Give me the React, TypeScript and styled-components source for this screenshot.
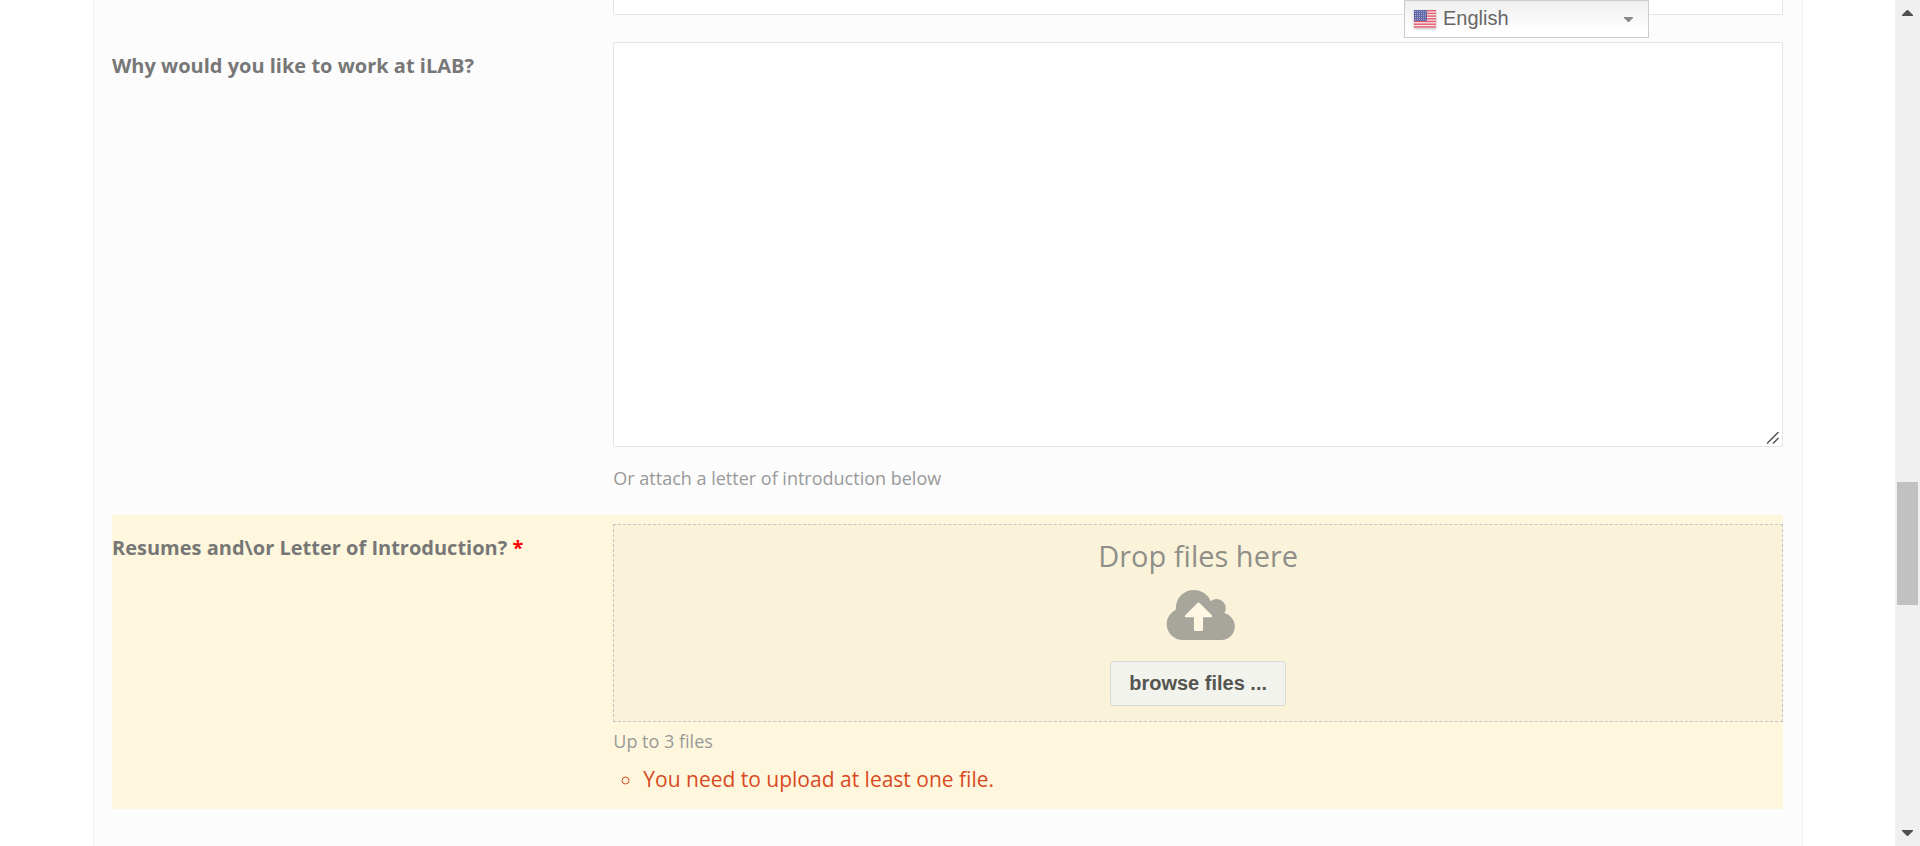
import React from "react";
import styled, { createGlobalStyle } from "styled-components";

const GlobalStyle = createGlobalStyle`
  *, *::before, *::after { box-sizing: border-box; }
  body {
    margin: 0;
    background: #fff;
    color: #777;
    font-family: "Open Sans", "Noto Sans", sans-serif;
    font-size: 20px;
    line-height: 30px;
  }
`;

const Shell = styled.div`
  display: flex;
  min-height: 100vh;
`;

const Content = styled.main`
  display: flex;
  flex: 1;
  min-width: 0;
  padding: 0 92px 0 93px;
`;

const Panel = styled.form`
  flex: 1;
  min-width: 0;
  padding: 0 19px 0 18px;
  background: #fcfcfc;
  border: solid #f2f2f2;
  border-width: 0 1px;
`;

const Field = styled.div<{ $invalid?: boolean }>`
  display: grid;
  grid-template-columns: 3fr 7fr;
  padding: ${(p) => (p.$invalid ? "9px 0 15px" : "0 0 23px")};
  background: ${(p) => (p.$invalid ? "#fff7dd" : "transparent")};
`;

const FirstField = styled(Field)`
  padding-bottom: 27px;
`;

const Label = styled.label`
  padding-top: 9px;
  font-weight: 700;
`;

const Required = styled.span`
  color: #f00;
`;

const Control = styled.div`
  min-width: 0;
`;

const TextInput = styled.input`
  display: block;
  width: 100%;
  height: 15px;
  border: 1px solid #e4e4e4;
  border-top: 0;
  border-radius: 0 0 2px 2px;
  background: #fff;
  outline: none;
`;

const TextAreaBox = styled.div`
  position: relative;
`;

const TextArea = styled.textarea`
  display: block;
  width: 100%;
  height: 405px;
  padding: 12px;
  border: 1px solid #e4e4e4;
  border-radius: 2px;
  background: #fff;
  color: #777;
  font: inherit;
  resize: none;
  outline: none;
`;

const Grip = styled.svg`
  position: absolute;
  right: 4px;
  bottom: 3px;
  width: 12px;
  height: 12px;
  fill: none;
  stroke: #555;
  stroke-width: 1.5;
  pointer-events: none;
`;

const Hint = styled.p<{ $gap: number }>`
  margin: ${(p) => p.$gap}px 0 0;
  color: #999;
  font-size: 18px;
  line-height: 28px;
`;

const DropArea = styled.div`
  display: flex;
  flex-direction: column;
  align-items: center;
  height: 198px;
  padding-top: 9px;
  border: 1px dashed #c4c4c4;
  background: #fbf3d9;
`;

const DropText = styled.span`
  color: #8f8f8a;
  font-size: 29px;
  line-height: 44px;
`;

const CloudUpload = styled.svg`
  width: 73px;
  height: 50px;
  margin: 12px 0 21px;
  fill: #a8a69c;
`;

const BrowseButton = styled.button`
  width: 176px;
  height: 45px;
  padding: 0 0 2px;
  border: 1px solid #d9dad6;
  border-radius: 3px;
  background: #f3f3ee;
  color: #555550;
  font: 700 20px/24px "Liberation Sans", Arial, sans-serif;
`;

const Errors = styled.ul`
  margin: 9px 0 0;
  padding: 0 0 0 30px;
  color: #d84a1f;
  font-size: 21px;
  line-height: 30px;
  list-style: circle;
`;

const Language = styled.label`
  position: fixed;
  top: 0;
  right: 271px;
  display: flex;
  align-items: center;
  width: 245px;
  height: 38px;
  padding: 0 15px 0 9px;
  border: 1px solid #ccc;
  background: linear-gradient(#eee, #fff 80%);
`;

const Flag = styled.svg`
  flex: none;
  width: 22px;
  height: 18px;
  filter: drop-shadow(0 1px 1px #0004);
`;

const LanguageSelect = styled.select`
  appearance: none;
  flex: 1;
  min-width: 0;
  margin-left: 7px;
  padding: 0 0 2px;
  border: 0;
  background: transparent;
  color: #666;
  font: 20px/24px "Liberation Sans", Arial, sans-serif;
  outline: none;
`;

const Caret = styled.svg`
  flex: none;
  width: 9px;
  height: 5px;
  fill: #888;
`;

const ScrollTrack = styled.aside`
  display: flex;
  flex: none;
  flex-direction: column;
  align-items: center;
  justify-content: space-between;
  width: 25px;
  padding: 10px 0;
  background: #f0f0f0;
`;

const ScrollArrow = styled.svg`
  width: 11px;
  height: 6px;
  fill: #505050;
`;

const ScrollSpace = styled.div<{ $grow: number }>`
  flex: ${(p) => p.$grow} 0 0;
`;

const ScrollThumb = styled.div`
  width: 21px;
  height: 123px;
  background: #c1c1c1;
`;

const stripes = [0, 1, 2, 3, 4, 5, 6];
const starRows = [1, 3, 5, 7, 9];
const starCols = [1, 3, 5, 7, 9, 11];

export default function App() {
  return (
    <>
      <GlobalStyle />
      <Shell>
        <Content>
          <Panel>
            <FirstField>
              <span />
              <Control>
                <TextInput type="text" aria-label="Previous answer" />
              </Control>
            </FirstField>
            <Field>
              <Label htmlFor="reason">Why would you like to work at iLAB?</Label>
              <Control>
                <TextAreaBox>
                  <TextArea id="reason" aria-describedby="reason-hint" />
                  <Grip viewBox="0 0 12 12" aria-hidden="true">
                    <path d="M0 11.500L11.500 0M6 11.500L11.500 6" />
                  </Grip>
                </TextAreaBox>
                <Hint id="reason-hint" $gap={17}>
                  Or attach a letter of introduction below
                </Hint>
              </Control>
            </Field>
            <Field $invalid>
              <Label htmlFor="browse">
                Resumes and\or Letter of Introduction? <Required>*</Required>
              </Label>
              <Control>
                <DropArea>
                  <DropText>Drop files here</DropText>
                  <CloudUpload viewBox="-192 128 2048 1408" aria-hidden="true">
                    <path fill="#fff7e1" d="M460 460h760v860h-760z" />
                    <path d="M1216 864q0-14-9-23l-352-352q-9-9-23-9t-23 9l-351 351q-10 12-10 24 0 14 9 23t23 9h224v352q0 13 9.500 22.500t22.500 9.500h192q13 0 22.500-9.500t9.500-22.500v-352h224q13 0 22.500-9.500t9.500-22.500zm640 288q0 159-112.500 271.500t-271.500 112.500h-1088q-185 0-316.500-131.500t-131.500-316.500q0-130 70-240t188-165q-2-30-2-43 0-212 150-362t362-150q156 0 285.500 87t188.500 231q71-62 166-62 106 0 181 75t75 181q0 76-41 138 130 31 213.500 135.500t83.500 238.500z" />
                  </CloudUpload>
                  <BrowseButton id="browse" type="button">
                    browse files ...
                  </BrowseButton>
                </DropArea>
                <Hint $gap={5}>Up to 3 files</Hint>
                <Errors>
                  <li>You need to upload at least one file.</li>
                </Errors>
              </Control>
            </Field>
          </Panel>
        </Content>
        <ScrollTrack aria-hidden="true">
          <ScrollArrow viewBox="0 0 11 6">
            <path d="M5 0h1l5 5v1H0V5z" />
          </ScrollArrow>
          <ScrollSpace $grow={466} />
          <ScrollThumb />
          <ScrollSpace $grow={225} />
          <ScrollArrow viewBox="0 0 11 6">
            <path d="M0 0h11v1L6 6H5L0 1z" />
          </ScrollArrow>
        </ScrollTrack>
      </Shell>
      <Language>
        <Flag viewBox="0 0 22 18" aria-hidden="true">
          <rect width="22" height="18" rx="1" fill="#f6e9ea" />
          {stripes.map((i) => (
            <rect key={i} y={i * 2.7} width="22" height="1.400" fill="#e2596c" />
          ))}
          <rect width="13" height="11" fill="#6669a8" />
          {starRows.map((y) =>
            starCols.map((x) => (
              <rect key={`${x}-${y}`} x={x} y={y} width="1" height="1" fill="#a3a5cf" />
            ))
          )}
        </Flag>
        <LanguageSelect aria-label="Language" defaultValue="English">
          <option>English</option>
        </LanguageSelect>
        <Caret viewBox="0 0 9 5" aria-hidden="true">
          <path d="M0 0h9v1L5 5H4L0 1z" />
        </Caret>
      </Language>
    </>
  );
}
